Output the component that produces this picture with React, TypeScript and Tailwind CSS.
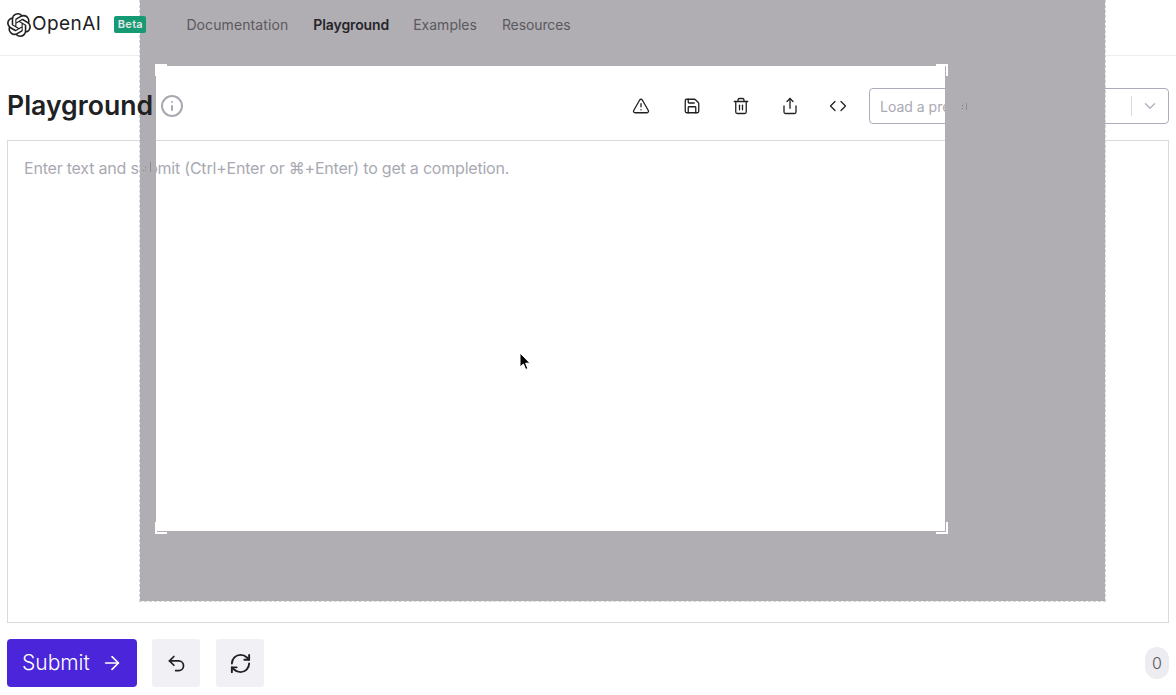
import { ArrowRight, ChevronDown, Code, Info, RefreshCw, Save, Share, Trash2, TriangleAlert, Undo2 } from "lucide-react";
import { SiOpenai } from "react-icons/si";

const nav = [
  { label: "Documentation", cls: "text-[#5b595f] font-normal tracking-[0.1px]" },
  { label: "Playground", cls: "ml-[25px] text-[#26252b] font-semibold tracking-[-0.1px]" },
  { label: "Examples", cls: "ml-[24px] text-[#5b595f] font-normal" },
  { label: "Resources", cls: "ml-[25px] text-[#5b595f] font-normal tracking-[-0.1px]" },
];

function Corner({ cls }: { cls: string }) {
  return <div className={`absolute w-3 h-3 border-white ${cls}`} />;
}

// the screen-capture selection lying over the page
function Selection() {
  return (
    <div className="absolute left-[139px] top-0 w-[967px] h-[602px] z-10 overflow-hidden border-l border-r border-b border-dashed border-[#d6d5d9]">
      <div className="absolute left-4 top-[66px] w-[789px] h-[465px] shadow-[0_0_0_1200px_#b0aeb2]" />
      <Corner cls="left-[15px] top-[64px] border-l-2 border-t-2" />
      <Corner cls="left-[796px] top-[64px] border-r-2 border-t-2" />
      <Corner cls="left-[15px] top-[522px] border-l-2 border-b-2" />
      <Corner cls="left-[796px] top-[522px] border-r-2 border-b-2" />
      {/* specks of the page text left in the grey */}
      <div className="absolute left-[822px] top-[105px] w-px h-px bg-[#77767b]" />
      <div className="absolute left-[822px] top-[108px] w-px h-px bg-[#77767b]" />
      <div className="absolute left-[826px] top-[103px] w-px h-[7px] bg-[#8c8b90]" />
      <div className="absolute left-[3px] top-[170px] w-px h-px bg-[#8c8b90]" />
      <div className="absolute left-[5px] top-[167px] w-px h-px bg-[#8c8b90]" />
      <div className="absolute left-[5px] top-[170px] w-px h-px bg-[#8c8b90]" />
      <div className="absolute left-[10px] top-[162px] w-px h-[10px] bg-[#8c8b90]" />
    </div>
  );
}

export default function App() {
  return (
    <div className="relative w-[1176px] h-[695px] overflow-hidden bg-white font-[Inter,sans-serif] text-[#202123]">
      <header className="h-[56px] border-b border-[#ececf1] flex items-center pl-[7px] pb-[6px]">
        <div className="relative z-20 flex items-center">
          <SiOpenai size={24} className="text-[#202123]" />
          <span className="ml-px text-[19px] font-normal tracking-[0.45px]">OpenAI</span>
          <span className="ml-[13px] w-[32px] h-[17px] rounded-[2px] bg-[#169a74] text-[#e6e6e6] text-[11px] leading-[17px] font-semibold tracking-[0.3px] text-center">Beta</span>
        </div>
        <nav className="relative z-20 ml-[40px] flex text-[14px]">
          {nav.map((n) => (
            <span key={n.label} className={n.cls}>{n.label}</span>
          ))}
        </nav>
      </header>

      <main className="px-[7px]">
        <div className="h-[84px] flex items-center pt-[16px]">
          <h1 className="relative z-20 -mt-[2px] text-[26.6px] font-semibold leading-none text-[#202123]">Playground</h1>
          <Info size={24} strokeWidth={2} className="ml-[7px] text-[#a9a9b3]" />
          <div className="ml-auto flex items-center text-[#202123]">
            <div className="flex items-center mr-[22px]">
              <TriangleAlert size={18} strokeWidth={1.75} />
              <Save size={18} strokeWidth={1.75} className="ml-[33px]" />
              <Trash2 size={18} strokeWidth={1.75} className="ml-[31px]" />
              <Share size={18} strokeWidth={1.75} className="ml-[31px]" />
              <Code size={18} strokeWidth={1.75} className="ml-[30px]" />
            </div>
            <div className="w-[300px] h-[36px] rounded-[4px] border border-[#acacbe] flex items-center text-[14px] text-[#a9a9b3]">
              <span className="pl-[10px] flex-1">Load a preset...</span>
              <span className="w-px h-5 bg-[#d9d9e3]" />
              <ChevronDown size={18} className="mx-[9px] text-[#b4b4c0]" />
            </div>
          </div>
        </div>

        <div className="h-[483px] border border-[#d9d9de] px-4 py-[15px] text-[16px] leading-[24px] tracking-[-0.21px] text-[#a9a9b3]">
          Enter text and submit (Ctrl+Enter or ⌘+Enter) to get a completion.
        </div>

        <div className="mt-4 flex items-center">
          <button type="button" className="w-[130px] h-[48px] rounded-[4px] bg-[#4a25d9] text-white text-[21px] font-light flex items-center pl-[15px] gap-[11px]">
            Submit <ArrowRight size={22} strokeWidth={1.75} />
          </button>
          <button type="button" className="ml-[15px] w-[48px] h-[48px] rounded-[3px] bg-[#f1f1f5] flex items-center justify-center">
            <Undo2 size={21} strokeWidth={2} />
          </button>
          <button type="button" className="ml-4 w-[48px] h-[48px] rounded-[3px] bg-[#f1f1f5] flex items-center justify-center">
            <RefreshCw size={23} strokeWidth={2} />
          </button>
          <span className="ml-auto w-[24px] h-[32px] rounded-full bg-[#ececf1] text-[16px] font-light text-[#55545c] flex items-center justify-center">0</span>
        </div>
      </main>

      <Selection />

      <svg className="absolute left-[519px] top-[352px] z-20" width="12" height="20" viewBox="0 0 12 20">
        <path d="M1 1v14l3.4-3 2.3 5.5 2.2-1-2.3-5.3H11z" fill="#000" stroke="#fff" strokeWidth="1" />
      </svg>
    </div>
  );
}
